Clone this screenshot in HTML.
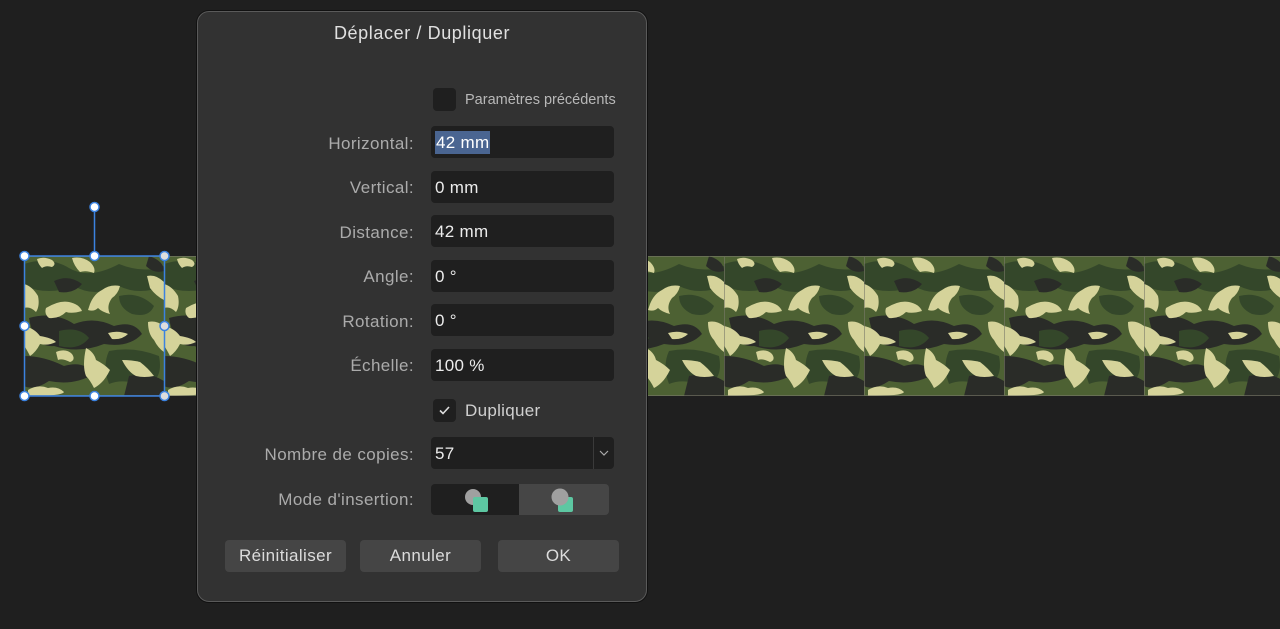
<!DOCTYPE html>
<html><head><meta charset="utf-8"><style>
*{margin:0;padding:0;box-sizing:border-box}
body{width:1280px;height:629px;background:#1f1f1f;position:relative;overflow:hidden;font-family:"Liberation Sans",sans-serif;}
.abs{position:absolute}
.dlg{left:197px;top:11px;width:450px;height:591px;background:#323232;border:1px solid #5a5a5a;border-radius:12px;box-shadow:0 0 0 1px #111}
.title{left:0;width:100%;top:11px;text-align:center;color:#e0e0e0;font-size:18px;letter-spacing:0.6px}
.lab{right:232px;color:#ababab;font-size:17px;text-align:right;white-space:nowrap;letter-spacing:0.4px}
.fld{left:233px;width:183px;height:32px;background:#1f1f1f;border-radius:4px;color:#ececec;font-size:17px;line-height:33px;padding-left:4px;letter-spacing:0.3px}
.btn{height:32px;background:#454545;border-radius:4px;color:#dcdcdc;font-size:17px;text-align:center;line-height:32px;letter-spacing:0.4px}
.cb{width:23px;height:23px;background:#1f1f1f;border-radius:4px}
</style></head><body>
<svg class="abs" style="left:24px;top:256px" width="1256" height="140">
<defs><pattern id="c" width="140" height="140" patternUnits="userSpaceOnUse">
<rect width="140" height="140" fill="#4d6133"/>
<path d="M0 8 Q25 0 45 12 T95 8 Q120 18 140 10 V30 Q115 40 95 30 Q70 42 50 30 Q25 40 0 30Z" fill="#34472a"/>
<path d="M30 25 Q45 18 58 28 Q50 38 35 36Z" fill="#2a2c28"/>
<path d="M95 40 Q115 35 130 50 Q125 62 108 58 Q95 52 95 40Z" fill="#34472a"/>
<path d="M5 62 Q30 55 50 68 Q70 60 90 70 Q110 64 118 78 Q105 92 80 88 Q55 98 30 90 Q10 92 5 62Z" fill="#2a2c28"/>
<path d="M35 75 Q55 70 65 82 Q55 95 35 90Z" fill="#34472a"/>
<path d="M0 100 Q20 100 40 110 Q60 104 70 118 Q50 130 25 125 Q10 135 0 130Z" fill="#2a2c28"/>
<path d="M85 95 Q110 90 135 100 Q140 125 120 130 Q100 122 85 128 Q78 110 85 95Z" fill="#34472a"/>
<path d="M105 120 Q125 115 140 125 V140 H100Z" fill="#2a2c28"/>
<path d="M125 0 Q140 5 140 15 Q130 18 122 10Z" fill="#2a2c28"/>
<g fill="#d5d39a">
<path d="M13 3 Q20 0 28 4 Q33 8 28 11 Q22 9 18 12 Q14 8 13 3Z"/>
<path d="M48 2 Q58 0 66 6 Q72 12 70 17 Q62 14 56 16 Q50 10 48 2Z"/>
<path d="M0 28 Q8 30 14 40 Q16 50 12 56 Q6 50 0 52Z"/>
<path d="M22 52 Q35 44 45 46 Q55 48 58 55 Q48 58 42 56 Q35 63 25 62 Q20 58 22 52Z"/>
<path d="M66 48 Q70 38 78 34 Q86 28 96 30 Q94 38 88 42 Q82 50 86 58 Q78 56 74 52 Q70 56 64 54Z"/>
<path d="M123 20 Q132 18 140 26 V44 Q132 40 126 32Z"/>
<path d="M0 70 Q10 72 16 80 Q28 82 32 86 Q24 90 16 88 Q12 96 6 100 Q2 92 0 90Z"/>
<path d="M84 77 Q94 74 104 78 Q98 84 88 83Z"/>
<path d="M124 66 Q132 64 140 70 V96 Q134 92 130 84 Q124 78 124 66Z"/>
<path d="M32 96 Q42 92 48 98 Q52 104 46 106 Q38 102 34 104Z"/>
<path d="M62 92 Q70 96 72 104 Q80 108 86 114 Q82 122 78 126 Q74 130 70 132 Q66 124 62 120 Q58 110 62 92Z"/>
<path d="M98 104 Q108 104 116 106 Q124 112 130 120 Q120 122 112 120 Q104 116 98 104Z"/>
<path d="M4 134 Q14 128 24 132 Q34 130 40 136 Q38 140 4 140Z"/>
</g></pattern></defs>
<rect width="1256" height="140" fill="url(#c)"/>
<g stroke="#7a7a6a" stroke-width="1" opacity=".6"><line x1="560.5" y1="0" x2="560.5" y2="140"/><line x1="700.5" y1="0" x2="700.5" y2="140"/><line x1="840.5" y1="0" x2="840.5" y2="140"/><line x1="980.5" y1="0" x2="980.5" y2="140"/><line x1="1120.5" y1="0" x2="1120.5" y2="140"/><line x1="0" y1="0.5" x2="1256" y2="0.5"/><line x1="0" y1="139.5" x2="1256" y2="139.5"/></g>
</svg>
<svg class="abs" style="left:0;top:0" width="200" height="420">
<rect x="24.5" y="256" width="140" height="140" fill="none" stroke="#3b82e0" stroke-width="1.5"/>
<line x1="94.5" y1="207" x2="94.5" y2="256" stroke="#3b82e0" stroke-width="1.5"/>
<g fill="#fff" stroke="#3b82e0" stroke-width="1.5">
<circle cx="94.5" cy="207" r="4.5"/><circle cx="24.5" cy="256" r="4.5"/><circle cx="94.5" cy="256" r="4.5"/><circle cx="164.5" cy="256" r="4.5" fill="#ddd"/>
<circle cx="24.5" cy="326" r="4.5"/><circle cx="164.5" cy="326" r="4.5" fill="#ddd"/>
<circle cx="24.5" cy="396" r="4.5"/><circle cx="94.5" cy="396" r="4.5"/><circle cx="164.5" cy="396" r="4.5" fill="#ddd"/></g>
</svg>
<div class="abs dlg">
<div class="abs title">Déplacer / Dupliquer</div>
<div class="abs cb" style="left:235px;top:76px"></div>
<div class="abs" style="left:267px;top:80px;color:#b8b8b8;font-size:14.5px">Paramètres précédents</div>
<div class="abs lab" style="top:122px">Horizontal:</div><div class="abs fld" style="top:114px"><span style="background:#4a6591;color:#fff;padding:2px 1px">42 mm</span></div>
<div class="abs lab" style="top:166px">Vertical:</div><div class="abs fld" style="top:159px">0 mm</div>
<div class="abs lab" style="top:211px">Distance:</div><div class="abs fld" style="top:203px">42 mm</div>
<div class="abs lab" style="top:255px">Angle:</div><div class="abs fld" style="top:248px">0 °</div>
<div class="abs lab" style="top:300px">Rotation:</div><div class="abs fld" style="top:292px">0 °</div>
<div class="abs lab" style="top:344px">Échelle:</div><div class="abs fld" style="top:337px">100 %</div>
<div class="abs cb" style="left:235px;top:387px"><svg width="23" height="23"><path d="M7 11.5l3 3 6-6.5" stroke="#ddd" stroke-width="1.6" fill="none"/></svg></div>
<div class="abs" style="left:267px;top:389px;color:#d0d0d0;font-size:17px;letter-spacing:0.3px">Dupliquer</div>
<div class="abs lab" style="top:433px">Nombre de copies:</div>
<div class="abs fld" style="top:425px">57</div>
<div class="abs" style="left:395px;top:425px;width:1px;height:32px;background:#3a3a3a"></div>
<svg class="abs" style="left:400px;top:436px" width="12" height="10"><path d="M2 3l4 4 4-4" stroke="#aaa" stroke-width="1.2" fill="none"/></svg>
<div class="abs lab" style="top:478px">Mode d'insertion:</div>
<div class="abs" style="left:233px;top:472px;width:88px;height:31px;background:#1f1f1f;border-radius:4px 0 0 4px"><svg width="88" height="31"><circle cx="42" cy="13" r="8" fill="#a0a0a0"/><rect x="42" y="13" width="15" height="15" rx="2" fill="#5dc7a2"/></svg></div>
<div class="abs" style="left:321px;top:472px;width:90px;height:31px;background:#464646;border-radius:0 4px 4px 0"><svg width="90" height="31"><rect x="39" y="13" width="15" height="15" rx="2" fill="#5dc7a2"/><circle cx="41" cy="13" r="8.5" fill="#a0a0a0"/></svg></div>
<div class="abs btn" style="left:27px;top:528px;width:121px">Réinitialiser</div>
<div class="abs btn" style="left:162px;top:528px;width:121px">Annuler</div>
<div class="abs btn" style="left:300px;top:528px;width:121px">OK</div>
</div>
</body></html>
